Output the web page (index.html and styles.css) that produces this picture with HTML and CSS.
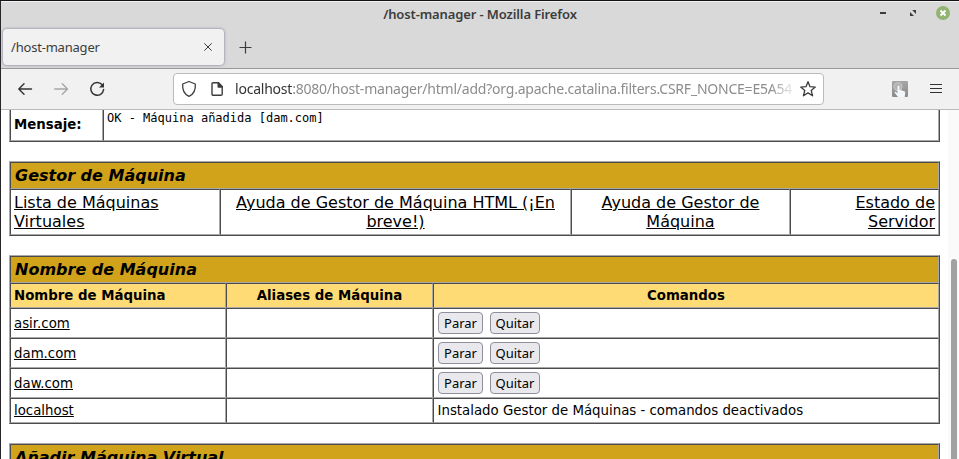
FILE: index.html
```html
<!DOCTYPE html>
<html lang="es">
<head>
<meta charset="utf-8">
<title>/host-manager</title>
<link rel="stylesheet" href="styles.css">
</head>
<body>
<div class="window">
  <header class="titlebar">
    <span class="window-title">/host-manager - Mozilla Firefox</span>
    <div class="window-controls">
      <svg width="70" height="14" viewBox="0 0 70 14">
        <path d="M0 6h6v2H0z" fill="#3c3c3c"/>
        <path d="M32.2 4H36v4zM30 6v4h4z" fill="#3c3c3c"/>
        <circle cx="63" cy="7" r="7" fill="#92b372"/>
        <path d="M60.5 4.500l5 5M65.500 4.500l-5 5" stroke="#fff" stroke-width="2"/>
      </svg>
    </div>
  </header>
  <div class="tabstrip">
    <div class="tab"><span class="tab-label">/host-manager</span>
      <svg width="8" height="8" viewBox="0 0 8 8"><path d="M.3.3l7.400 7.400M7.700.3L.3 7.700" stroke="#3c3c3c"/></svg>
    </div>
    <svg class="newtab" width="13" height="13" viewBox="0 0 13 13"><path d="M6.500 .5v12M.5 6.500h12" stroke="#3c3c3c" stroke-width="1.200"/></svg>
  </div>
  <nav class="toolbar">
    <svg class="nav-icons" width="88" height="18" viewBox="0 0 88 18" fill="none" stroke-linecap="round" stroke-linejoin="round" stroke-width="1.400">
      <path d="M13.500 9H.8M6 3.800L.8 9 6 14.200" stroke="#333"/>
      <path d="M36.700 9h12.800M44.300 3.800L49.500 9l-5.200 5.200" stroke="#a6a6a6"/>
      <path d="M84.200 4.800A6.400 6.400 0 1 0 85.600 9.500" stroke="#333" stroke-width="1.500"/>
      <path d="M86 2.500v5h-5z" fill="#333" stroke="none"/>
    </svg>
    <div class="urlbar">
      <svg class="shield" width="16" height="18" viewBox="0 0 16 18" fill="none" stroke="#3c3c3c" stroke-width="1.300" stroke-linejoin="round"><path d="M8 1.500L14.300 4c.4 5-1.300 10.200-6.300 12.300C3 14.200 1.300 9 1.700 4z"/></svg>
      <svg class="page" width="12" height="14" viewBox="0 0 12 14" fill="none" stroke="#3c3c3c" stroke-width="1.400" stroke-linejoin="round"><path d="M1 2q0-1.200 1.200-1.200H7.500L11.200 4.500V12q0 1.200-1.200 1.200H2.200Q1 13.200 1 12z"/><path d="M7.200 1v4H11z" fill="#3c3c3c"/></svg>
      <span class="url"><span class="host">localhost</span>:8080/host-manager/html/add?org.apache.catalina.filters.CSRF_NONCE=E5A54</span>
      <svg class="star" width="18" height="18" viewBox="0 0 18 18" fill="none" stroke="#3c3c3c" stroke-width="1.300" stroke-linejoin="round"><path d="M9 1.700l2 5 5.300.4-4.100 3.400 1.400 5.300L9 12.900l-4.600 2.900 1.400-5.300L1.700 7.100 7 6.700z"/></svg>
    </div>
    <svg class="ext" width="16" height="16" viewBox="0 0 16 16"><defs><linearGradient id="touch" x1="0" y1="0" x2="0" y2="1"><stop offset="0" stop-color="#a6a6a6"/><stop offset="1" stop-color="#8a8a8a"/></linearGradient></defs><rect width="16" height="16" rx="1" fill="url(#touch)"/><circle cx="6" cy="5.800" r="4.600" fill="#c4c4c4"/><circle cx="6" cy="5.800" r="3.200" fill="#b0b0b0"/><path d="M5.500 5q1-1 2 0V9l1.700.3 1.600.4 1.500.5q.9.400.9 1.600L12.700 16H6L2.500 11.600q.6-1.300 1.700-.4l1.300 1z" fill="#f2f7fb"/></svg>
    <svg class="menu" width="12" height="12" viewBox="0 0 12 12"><path d="M0 1.500h12M0 5.500h12M0 9.500h12" stroke="#333" stroke-width="1.200"/></svg>
  </nav>
  <div class="viewport">
    <main class="content">
      <div class="table message">
        <div class="cell label">Mensaje:</div>
        <div class="cell output">OK - Máquina añadida [dam.com]</div>
      </div>
      <div class="table manager">
        <div class="cell heading">Gestor de Máquina</div>
        <div class="cell"><a>Lista de Máquinas<br>Virtuales</a></div>
        <div class="cell center"><a>Ayuda de Gestor de Máquina HTML (¡En<br>breve!)</a></div>
        <div class="cell center"><a>Ayuda de Gestor de<br>Máquina</a></div>
        <div class="cell right"><a>Estado de<br>Servidor</a></div>
      </div>
      <div class="table hosts">
        <div class="cell heading">Nombre de Máquina</div>
        <div class="cell column">Nombre de Máquina</div>
        <div class="cell column center">Aliases de Máquina</div>
        <div class="cell column center">Comandos</div>
        <div class="cell"><a>asir.com</a></div><div class="cell"></div>
        <div class="cell commands"><button class="stop">Parar</button><button class="remove">Quitar</button></div>
        <div class="cell"><a>dam.com</a></div><div class="cell"></div>
        <div class="cell commands"><button class="stop">Parar</button><button class="remove">Quitar</button></div>
        <div class="cell"><a>daw.com</a></div><div class="cell"></div>
        <div class="cell commands"><button class="stop">Parar</button><button class="remove">Quitar</button></div>
        <div class="cell"><a>localhost</a></div><div class="cell"></div>
        <div class="cell note">Instalado Gestor de Máquinas - comandos deactivados</div>
      </div>
      <div class="table add"><div class="cell heading">Añadir Máquina Virtual</div></div>
    </main>
    <div class="scrollbar"><div class="thumb"></div></div>
  </div>
</div>
</body>
</html>
```
FILE: styles.css
```css
* { box-sizing: border-box; }
body { margin: 0; background: #fff; }
svg { display: block; flex: none; }
.window {
  width: 959px; height: 459px; overflow: hidden;
  display: flex; flex-direction: column;
  border-top: 1px solid #151317; border-left: 1px solid #28262b;
  font-family: "Noto Sans", sans-serif; color: #3c3c3c;
}
.titlebar { height: 27px; flex: none; background: #d9d9d9; border-top: 1px solid #f2f2f2; display: grid; grid-template-columns: 1fr; }
.window-title, .window-controls { grid-area: 1 / 1; }
.window-title { justify-self: center; font-size: 13px; font-weight: 600; letter-spacing: -0.12px; line-height: 25px; white-space: nowrap; }
.window-controls { justify-self: end; padding: 4px 9px 0 0; }
.tabstrip { height: 41px; flex: none; display: flex; background: #d9d9d9; border-bottom: 1px solid #999; padding: 1px 0 0 2px; }
.tab { width: 221px; height: 36px; display: flex; align-items: center; justify-content: space-between; padding: 0 12px 0 8px; background: #f1f1f1; border-radius: 4px; box-shadow: 0 0 3px #77738a; font-size: 13px; letter-spacing: -0.2px; }
.newtab { margin: 12px 0 0 15px; }
.toolbar { height: 41px; flex: none; display: flex; align-items: center; background: #f1f1f1; border-bottom: 1px solid #bbb; padding-left: 17px; }
.urlbar { width: 651px; height: 32px; margin-left: 67px; display: flex; align-items: center; background: #fff; border: 1px solid #bbb; border-radius: 4px; padding-left: 7px; }
.page { margin-left: 14px; }
.url { width: 560px; margin-left: 12px; overflow: hidden; white-space: nowrap; font-size: 14px; letter-spacing: -0.22px; line-height: 30px; color: #8c8c8c; -webkit-mask-image: linear-gradient(to right, #000 535px, transparent 562px); mask-image: linear-gradient(to right, #000 535px, transparent 562px); }
.host { color: #333; }
.star { margin-left: 4px; }
.ext { margin-left: 68px; }
.menu { margin-left: 22px; }

.viewport { height: 349px; display: flex; overflow: hidden; }
.content { width: 947px; flex: none; padding-left: 8px; display: flex; flex-direction: column; gap: 19px; font-family: "DejaVu Sans", sans-serif; font-size: 13.333px; color: #000; }
.table { width: 931px; flex: none; display: grid; border: 1px solid; border-color: #a9a9a9 #4b4b4d #4b4b4d #a9a9a9; }
.cell { border: 1px solid; border-color: #4b4b4d #a9a9a9 #a9a9a9 #4b4b4d; padding: 0 3px; display: flex; align-items: center; white-space: nowrap; }
.cell a { text-decoration: underline; }
.heading { grid-column: 1 / -1; padding-left: 4px; background: #d0a31a; font-size: 16px; font-weight: bold; font-style: oblique; }
.column { background: #ffdb75; font-weight: bold; }
.center { justify-content: center; text-align: center; }
.right { justify-content: flex-end; text-align: right; }
.message { grid-template-columns: 93px 836px; grid-template-rows: 31px; border-top: 0; }
.message .cell { border-top: 0; }
.message .label { font-weight: bold; padding-bottom: 2px; }
.output { align-items: flex-start; font-family: "DejaVu Sans Mono", monospace; font-size: 12px; line-height: 16px; }
.manager { grid-template-columns: 210px 351px 219px 149px; grid-template-rows: 27px 46px; font-size: 16px; line-height: 19px; }
.hosts { grid-template-columns: 216px 207px 506px; grid-template-rows: 27px 25px 30px 30px 30px 25px; }
.add { grid-template-rows: 27px; }
.commands { gap: 7px; padding-left: 4px; }
.note { padding-left: 3.500px; }
button { height: 22px; padding: 0; background: #e9e9ed; border: 1px solid #8f8f9d; border-radius: 4px; color: #000; font-family: "Noto Sans", sans-serif; font-size: 13px; line-height: 19px; }
.stop { width: 45px; }
.remove { width: 50px; }
.scrollbar { width: 11px; flex: none; background: #fafafa; padding: 149px 2px 0 3px; }
.thumb { width: 6px; height: 210px; border-radius: 3px 3px 0 0; background: #a1a1a1; }
```
